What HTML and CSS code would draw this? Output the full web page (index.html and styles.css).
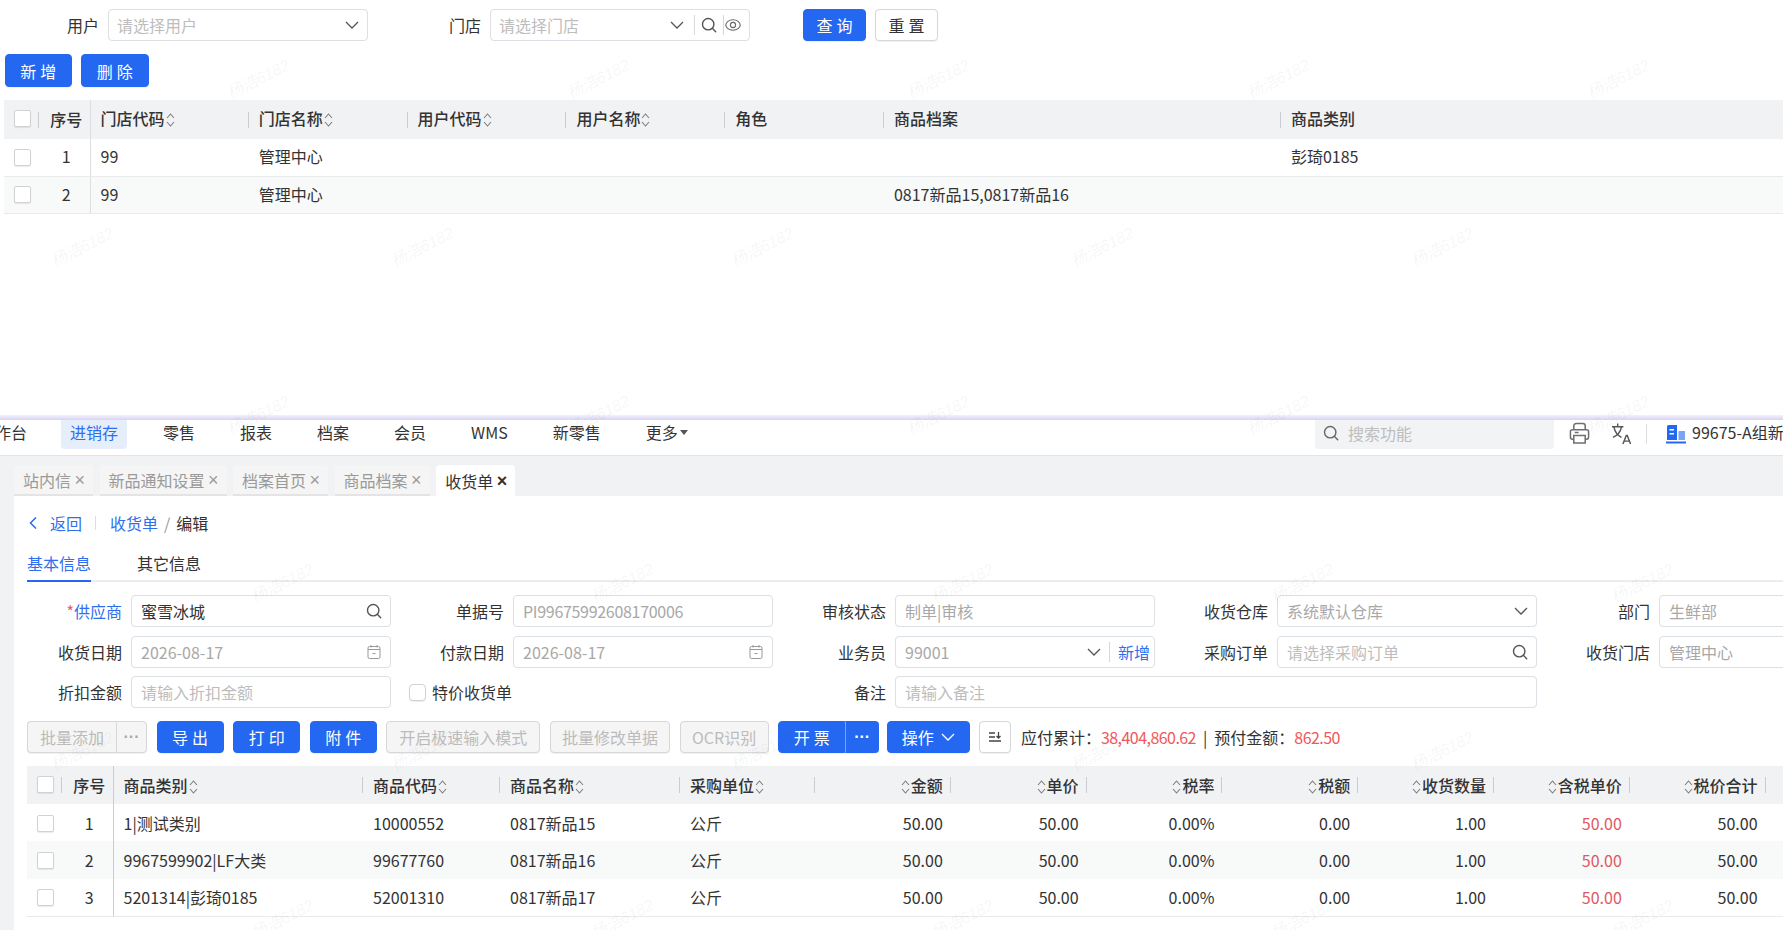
FILE: index.html
```html
<!DOCTYPE html>
<html lang="zh-CN">

<head>
    <meta charset="UTF-8">
    <title>收货单</title>
    <link rel="stylesheet" href="styles.css">
</head>

<body>
    <svg class="defs" aria-hidden="true">
        <symbol id="i-down" viewBox="0 0 14 14"><path d="M1 4l6 6 6-6" fill="none" stroke="currentColor" stroke-width="1.3"/></symbol>
        <symbol id="i-search" viewBox="0 0 16 16"><circle cx="7.2" cy="7.2" r="5.7" fill="none" stroke="currentColor" stroke-width="1.4"/><path d="M11.3 11.3l3.4 3.4" stroke="currentColor" stroke-width="1.4" stroke-linecap="round"/></symbol>
        <symbol id="i-eye" viewBox="0 0 16 16"><ellipse cx="8" cy="8" rx="7.2" ry="5.2" fill="none" stroke="currentColor" stroke-width="1.1"/><circle cx="8" cy="8" r="2.6" fill="none" stroke="currentColor" stroke-width="1.1"/></symbol>
        <symbol id="i-sort" viewBox="0 0 9 16"><path d="M1 6l3.5-4L8 6M1 10l3.5 4L8 10" fill="none" stroke="currentColor" stroke-width="1.1"/></symbol>
        <symbol id="i-date" viewBox="0 0 16 16"><rect x="2" y="2.5" width="12" height="12" rx="1.5" fill="none" stroke="currentColor"/><path d="M2 5.5h12M5 1v2.5M11 1v2.5M6.5 9.5h3" fill="none" stroke="currentColor"/></symbol>
    </svg>

    <div class="top-panel">
        <div class="filter">
            <div class="field">
                <label class="field-label">用户</label>
                <div class="input"><span class="hint">请选择用户</span><svg class="ico"><use href="#i-down"/></svg></div>
            </div>
            <div class="field">
                <label class="field-label">门店</label>
                <div class="input input-store">
                    <span class="hint">请选择门店</span>
                    <svg class="ico"><use href="#i-down"/></svg>
                    <i class="vline"></i>
                    <svg class="ico ico-search"><use href="#i-search"/></svg>
                    <i class="vline"></i>
                    <svg class="ico ico-eye"><use href="#i-eye"/></svg>
                </div>
            </div>
            <div class="filter-actions">
                <button class="btn btn-blue btn-two">查询</button>
                <button class="btn btn-two">重置</button>
            </div>
        </div>
        <div class="top-actions">
            <button class="btn btn-blue btn-two">新增</button>
            <button class="btn btn-blue btn-two">删除</button>
        </div>
        <table class="grid grid-top">
            <colgroup>
                <col class="c-check"><col class="c-seq">
                <col class="c-top"><col class="c-top"><col class="c-top"><col class="c-top"><col class="c-top">
                <col class="c-top-wide"><col>
            </colgroup>
            <thead>
                <tr>
                    <th class="cell-check"><span class="check"></span></th>
                    <th class="cell-seq">序号</th>
                    <th>门店代码<svg class="sort"><use href="#i-sort"/></svg></th>
                    <th>门店名称<svg class="sort"><use href="#i-sort"/></svg></th>
                    <th>用户代码<svg class="sort"><use href="#i-sort"/></svg></th>
                    <th>用户名称<svg class="sort"><use href="#i-sort"/></svg></th>
                    <th>角色</th>
                    <th>商品档案</th>
                    <th>商品类别</th>
                </tr>
            </thead>
            <tbody>
                <tr>
                    <td class="cell-check"><span class="check"></span></td>
                    <td class="cell-seq">1</td>
                    <td>99</td><td>管理中心</td><td></td><td></td><td></td><td></td><td>彭琦0185</td>
                </tr>
                <tr>
                    <td class="cell-check"><span class="check"></span></td>
                    <td class="cell-seq">2</td>
                    <td>99</td><td>管理中心</td><td></td><td></td><td></td><td>0817新品15,0817新品16</td><td></td>
                </tr>
            </tbody>
        </table>
    </div>

    <div class="seam"></div>

    <nav class="nav">
        <a class="nav-item nav-first">工作台</a>
        <a class="nav-item active">进销存</a>
        <a class="nav-item">零售</a>
        <a class="nav-item">报表</a>
        <a class="nav-item">档案</a>
        <a class="nav-item">会员</a>
        <a class="nav-item">WMS</a>
        <a class="nav-item">新零售</a>
        <a class="nav-item">更多<i class="caret"></i></a>
        <div class="nav-right">
            <div class="nav-search"><svg class="ico ico-nav"><use href="#i-search"/></svg><span>搜索功能</span></div>
            <svg class="nav-icon" viewBox="0 0 22 24"><path d="M5 8V4a2.500 2.500 0 0 1 2.500-2.500h7A2.500 2.500 0 0 1 17 4v4M5 18H3.500A2 2 0 0 1 1.500 16v-6a2 2 0 0 1 2-2h15a2 2 0 0 1 2 2v6a2 2 0 0 1-2 2H17M5 14h12v8H5zM6 11h4" fill="none" stroke="#6f6f6f" stroke-width="1.6"/></svg>
            <svg class="nav-icon nav-lang" viewBox="0 0 22 24"><path d="M1 5h12M7 1.500V5M3 5c1 5 4 9 8 11M11 5c-1 5-4 9-9 11" fill="none" stroke="#555" stroke-width="1.500"/><path d="M12.500 23l3.500-9h1l3.500 9M14 20h5.500" fill="none" stroke="#555" stroke-width="1.500"/></svg>
            <i class="nav-sep"></i>
            <svg class="nav-org" viewBox="0 0 20 20"><path d="M1 2.500A1.500 1.500 0 0 1 2.500 1H11v15H1z" fill="#2468f2"/><path d="M12.500 7H19v9h-6.500z" fill="#7aa5f7"/><path d="M0 17.500h20V19.500H0z" fill="#2468f2"/><path d="M3.500 5h4.500v1.500H3.500zM3.500 9h4.500v1.500H3.500z" fill="#fff"/></svg>
            <span class="nav-org-name">99675-A组新零售门店</span>
        </div>
    </nav>

    <div class="work">
        <div class="tabs">
            <a class="tab">站内信<b>×</b></a>
            <a class="tab">新品通知设置<b>×</b></a>
            <a class="tab">档案首页<b>×</b></a>
            <a class="tab">商品档案<b>×</b></a>
            <a class="tab tab-on">收货单<b>×</b></a>
        </div>

        <div class="sheet">
            <div class="crumb">
                <svg class="crumb-back" viewBox="0 0 8 14"><path d="M7 1.500L1.500 7 7 12.500" fill="none" stroke="#2468f2" stroke-width="1.500"/></svg>
                <a class="link">返回</a>
                <i class="crumb-sep"></i>
                <a class="link">收货单</a>
                <span class="crumb-slash">/</span>
                <span>编辑</span>
            </div>

            <div class="subtabs">
                <a class="subtab subtab-on">基本信息</a>
                <a class="subtab">其它信息</a>
            </div>

            <div class="form">
                <div class="field">
                    <label class="field-label req"><em>*</em>供应商</label>
                    <div class="input"><span class="value">蜜雪冰城</span><svg class="ico ico-search"><use href="#i-search"/></svg></div>
                </div>
                <div class="field">
                    <label class="field-label">单据号</label>
                    <div class="input"><span class="muted tight">PI99675992608170006</span></div>
                </div>
                <div class="field">
                    <label class="field-label">审核状态</label>
                    <div class="input"><span class="muted">制单|审核</span></div>
                </div>
                <div class="field">
                    <label class="field-label">收货仓库</label>
                    <div class="input"><span class="muted">系统默认仓库</span><svg class="ico"><use href="#i-down"/></svg></div>
                </div>
                <div class="field">
                    <label class="field-label">部门</label>
                    <div class="input"><span class="muted">生鲜部</span></div>
                </div>

                <div class="field">
                    <label class="field-label">收货日期</label>
                    <div class="input"><span class="muted">2026-08-17</span><svg class="ico ico-light"><use href="#i-date"/></svg></div>
                </div>
                <div class="field">
                    <label class="field-label">付款日期</label>
                    <div class="input"><span class="muted">2026-08-17</span><svg class="ico ico-light"><use href="#i-date"/></svg></div>
                </div>
                <div class="field">
                    <label class="field-label">业务员</label>
                    <div class="input input-staff">
                        <span class="muted">99001</span>
                        <svg class="ico"><use href="#i-down"/></svg>
                        <i class="vline"></i>
                        <a class="link">新增</a>
                    </div>
                </div>
                <div class="field">
                    <label class="field-label">采购订单</label>
                    <div class="input"><span class="hint">请选择采购订单</span><svg class="ico ico-search"><use href="#i-search"/></svg></div>
                </div>
                <div class="field">
                    <label class="field-label">收货门店</label>
                    <div class="input"><span class="muted">管理中心</span></div>
                </div>

                <div class="field">
                    <label class="field-label">折扣金额</label>
                    <div class="input"><span class="hint">请输入折扣金额</span></div>
                </div>
                <div class="field field-check">
                    <span class="check check-round"></span><span>特价收货单</span>
                </div>
                <div class="field field-wide">
                    <label class="field-label">备注</label>
                    <div class="input"><span class="hint">请输入备注</span></div>
                </div>
            </div>

            <div class="toolbar">
                <div class="btn-split btn-off">
                    <button class="btn btn-off btn-main">批量添加</button>
                    <button class="btn btn-off btn-more">···</button>
                </div>
                <button class="btn btn-blue btn-two btn-w67">导出</button>
                <button class="btn btn-blue btn-two btn-w67">打印</button>
                <button class="btn btn-blue btn-two btn-w67">附件</button>
                <button class="btn btn-off btn-w154">开启极速输入模式</button>
                <button class="btn btn-off btn-w120">批量修改单据</button>
                <button class="btn btn-off btn-w89">OCR识别</button>
                <div class="btn-split">
                    <button class="btn btn-blue btn-two btn-w67">开票</button>
                    <button class="btn btn-blue btn-more">···</button>
                </div>
                <button class="btn btn-blue btn-drop">操作<svg class="ico"><use href="#i-down"/></svg></button>
                <button class="btn btn-square">
                    <svg viewBox="0 0 14 14"><path d="M1 3h6M1 7h6M1 11h12M10.500 2v6M8.500 6l2 2 2-2" fill="none" stroke="#444" stroke-width="1.300"/></svg>
                </button>
                <div class="totals">应付累计：<span class="red">38,404,860.62</span><i>|</i>预付金额：<span class="red">862.50</span></div>
            </div>

            <table class="grid grid-main">
                <colgroup>
                    <col class="c-check"><col class="c-seq">
                    <col class="c-cat"><col class="c-code"><col class="c-name"><col class="c-unit">
                    <col class="c-num"><col class="c-num"><col class="c-num"><col class="c-num"><col class="c-num"><col class="c-num"><col class="c-num">
                    <col>
                </colgroup>
                <thead>
                    <tr>
                        <th class="cell-check"><span class="check"></span></th>
                        <th class="cell-seq">序号</th>
                        <th>商品类别<svg class="sort"><use href="#i-sort"/></svg></th>
                        <th>商品代码<svg class="sort"><use href="#i-sort"/></svg></th>
                        <th>商品名称<svg class="sort"><use href="#i-sort"/></svg></th>
                        <th>采购单位<svg class="sort"><use href="#i-sort"/></svg></th>
                        <th class="num"><svg class="sort"><use href="#i-sort"/></svg>金额</th>
                        <th class="num"><svg class="sort"><use href="#i-sort"/></svg>单价</th>
                        <th class="num"><svg class="sort"><use href="#i-sort"/></svg>税率</th>
                        <th class="num"><svg class="sort"><use href="#i-sort"/></svg>税额</th>
                        <th class="num"><svg class="sort"><use href="#i-sort"/></svg>收货数量</th>
                        <th class="num"><svg class="sort"><use href="#i-sort"/></svg>含税单价</th>
                        <th class="num"><svg class="sort"><use href="#i-sort"/></svg>税价合计</th>
                        <th></th>
                    </tr>
                </thead>
                <tbody>
                    <tr>
                        <td class="cell-check"><span class="check"></span></td>
                        <td class="cell-seq">1</td>
                        <td>1|测试类别</td><td>10000552</td><td>0817新品15</td><td>公斤</td>
                        <td class="num">50.00</td><td class="num">50.00</td><td class="num">0.00%</td><td class="num">0.00</td><td class="num">1.00</td><td class="num red-soft">50.00</td><td class="num">50.00</td><td></td>
                    </tr>
                    <tr>
                        <td class="cell-check"><span class="check"></span></td>
                        <td class="cell-seq">2</td>
                        <td>9967599902|LF大类</td><td>99677760</td><td>0817新品16</td><td>公斤</td>
                        <td class="num">50.00</td><td class="num">50.00</td><td class="num">0.00%</td><td class="num">0.00</td><td class="num">1.00</td><td class="num red-soft">50.00</td><td class="num">50.00</td><td></td>
                    </tr>
                    <tr>
                        <td class="cell-check"><span class="check"></span></td>
                        <td class="cell-seq">3</td>
                        <td>5201314|彭琦0185</td><td>52001310</td><td>0817新品17</td><td>公斤</td>
                        <td class="num">50.00</td><td class="num">50.00</td><td class="num">0.00%</td><td class="num">0.00</td><td class="num">1.00</td><td class="num red-soft">50.00</td><td class="num">50.00</td><td></td>
                    </tr>
                </tbody>
            </table>
        </div>
    </div>

    <!-- watermark -->
    <div class="wm">
        <div class="wm-row wm-a"><span>杨浩6182</span><span>杨浩6182</span><span>杨浩6182</span><span>杨浩6182</span><span>杨浩6182</span></div>
        <div class="wm-row wm-b"><span>杨浩6182</span><span>杨浩6182</span><span>杨浩6182</span><span>杨浩6182</span><span>杨浩6182</span></div>
        <div class="wm-row wm-a"><span>杨浩6182</span><span>杨浩6182</span><span>杨浩6182</span><span>杨浩6182</span><span>杨浩6182</span></div>
        <div class="wm-row wm-c"><span>杨浩6182</span><span>杨浩6182</span><span>杨浩6182</span><span>杨浩6182</span><span>杨浩6182</span></div>
        <div class="wm-row wm-b"><span>杨浩6182</span><span>杨浩6182</span><span>杨浩6182</span><span>杨浩6182</span><span>杨浩6182</span></div>
        <div class="wm-row wm-c"><span>杨浩6182</span><span>杨浩6182</span><span>杨浩6182</span><span>杨浩6182</span><span>杨浩6182</span></div>
    </div>
</body>

</html>
```

FILE: styles.css
```css
* {
    box-sizing: border-box;
}

body {
    margin: 0;
    width: 1783px;
    height: 930px;
    overflow: hidden;
    position: relative;
    background: #fff;
    color: #333;
    font-family: "Noto Sans CJK SC", "Noto Sans", sans-serif;
    font-size: 16px;
    line-height: 22px;
}

.defs {
    display: none;
}

/* shared controls */
.ico {
    width: 14px;
    height: 14px;
    flex: none;
    color: #555;
}

.ico-search {
    width: 16px;
    height: 16px;
}

.ico-light {
    width: 16px;
    height: 16px;
    color: #999;
}

.vline {
    width: 1px;
    height: 20px;
    background: #d8d8d8;
    flex: none;
}

.field {
    display: flex;
    align-items: center;
    gap: 9px;
}

.field-label {
    width: 108px;
    flex: none;
    text-align: right;
    white-space: nowrap;
}

.req {
    color: #2f6fed;
}

.req em {
    font-style: normal;
    color: #f0585c;
}

.input {
    width: 260px;
    height: 32px;
    flex: none;
    display: flex;
    align-items: center;
    justify-content: space-between;
    padding: 0 8px 0 9px;
    border: 1px solid #dcdfe3;
    border-radius: 4px;
    background: #fff;
    white-space: nowrap;
}

.hint {
    color: #bdbdbd;
}

.muted {
    color: #a8a8a8;
}

.tight {
    letter-spacing: -0.3px;
}

.value {
    color: #333;
}

.link {
    color: #2f6fed;
}

.btn {
    height: 32px;
    padding: 0 13px;
    border: 1px solid #d5d7da;
    border-radius: 4px;
    background: #fff;
    color: #333;
    font: inherit;
    white-space: nowrap;
    box-shadow: 0 1px 1px rgba(0, 0, 0, 0.06);
}

.btn-blue {
    background: #2468f2;
    border-color: #2468f2;
    color: #fff;
}

.btn-off {
    background: #f5f5f5;
    color: #bcbcbc;
}

.btn-two {
    letter-spacing: 4px;
    text-indent: 4px;
}

.btn-w67 {
    width: 67px;
    padding: 0;
}

.btn-w154 {
    width: 154px;
    padding: 0;
}

.btn-w120 {
    width: 120px;
    padding: 0;
}

.btn-w89 {
    width: 89px;
    padding: 0;
}

.check {
    display: block;
    width: 17px;
    height: 17px;
    flex: none;
    background: #fff;
    border: 1px solid #d2d2d2;
    border-radius: 2px;
    box-shadow: 0 1px 1px rgba(0, 0, 0, 0.08);
}

.check-round {
    border-radius: 4px;
}

/* top screen */
.top-panel {
    height: 415px;
    padding: 9px 0 0 4px;
}

.filter {
    display: flex;
    align-items: center;
    margin-left: 4px;
}

.filter .field {
    margin-right: 22px;
}

.filter .field-label {
    width: 91px;
}

.filter .input {
    padding-left: 8px;
}

.input-store {
    justify-content: flex-start;
}

.input-store .hint {
    flex: 1;
}

.input-store .ico {
    margin-right: 10px;
}

.input-store .ico-search {
    margin: 0 6px;
}

.input-store .ico-eye {
    width: 16px;
    height: 16px;
    margin: 0 0 0 1px;
    color: #666;
}

.filter-actions {
    display: flex;
    gap: 9px;
    margin-left: 31px;
}

.filter-actions .btn {
    width: 63px;
    padding: 0;
}

.top-actions {
    display: flex;
    gap: 9px;
    margin: 13px 0 0 0.5px;
}

.top-actions .btn {
    width: 67.5px;
    height: 33px;
    padding: 0;
}

/* tables */
.grid {
    table-layout: fixed;
    border-collapse: collapse;
    width: 100%;
}

.grid th {
    height: 39px;
    padding: 0 10px;
    text-align: left;
    font-weight: 500;
    background-color: #f1f2f4;
    background-image: linear-gradient(#c9ccd0, #c9ccd0);
    background-position: right center;
    background-size: 1px 16px;
    background-repeat: no-repeat;
    white-space: nowrap;
}

.grid th:last-child {
    background-image: none;
}

.grid td {
    height: 37px;
    padding: 0 10px 2px;
    white-space: nowrap;
}

.grid tbody tr:nth-child(even) {
    background: #f8f9f9;
}

.grid tbody tr:last-child td {
    border-bottom: 1px solid #e8eaec;
}

.grid-top {
    width: 1779px;
    margin-top: 13px;
}

.grid-top th {
    padding-bottom: 3px;
}

.grid-top tbody td {
    border-bottom: 1px solid #e8eaec;
}

.grid .cell-check {
    padding: 0 0 0 10px;
}

.grid th.cell-check {
    padding-bottom: 2px;
}

.grid .cell-seq {
    padding: 0 0 2px 4px;
    text-align: center;
    border-right: 1px solid #dcdee1;
    background-image: none;
}

.c-check {
    width: 35px;
}

.c-seq {
    width: 51px;
}

.c-top {
    width: 158.8px;
}

.c-top-wide {
    width: 397px;
}

.c-cat {
    width: 250px;
}

.c-code {
    width: 137px;
}

.c-name {
    width: 180px;
}

.c-unit {
    width: 135px;
}

.c-num {
    width: 135.8px;
}

.sort {
    width: 9px;
    height: 16px;
    margin: 0 1px;
    vertical-align: -3px;
    color: #7d7d7d;
}

.grid .num {
    text-align: right;
    padding-right: 8px;
}

.red-soft {
    color: #e0595f;
}

/* nav */
.seam {
    height: 5px;
    background: linear-gradient(#f4f2fc, #d6d4f2);
}

.nav {
    height: 36px;
    display: flex;
    border-bottom: 1px solid #e3e4e6;
    overflow: hidden;
    background: #fff;
}

.nav-item {
    height: 29px;
    padding-bottom: 5px;
    margin-right: 45px;
    flex: none;
    display: flex;
    align-items: center;
    color: #333;
    white-space: nowrap;
}

.nav-first {
    margin-left: -21px;
    margin-right: 34px;
}

.nav-item.active {
    background: #e6eefc;
    color: #2f6fed;
    margin-right: 36px;
    padding: 0 9px 5px;
    border-radius: 0 0 4px 4px;
}

.caret {
    width: 0;
    height: 0;
    margin-left: 2px;
    border: 4px solid transparent;
    border-top: 5px solid #555;
    border-bottom: 0;
}

.nav-right {
    position: absolute;
    left: 1315px;
    display: flex;
    align-items: flex-start;
    height: 29px;
    white-space: nowrap;
}

.nav-search {
    width: 239px;
    height: 29px;
    flex: none;
    display: flex;
    align-items: center;
    gap: 9px;
    padding: 0 0 4px 8px;
    background: #f2f3f5;
    border-radius: 0 0 4px 4px;
    color: #bdbdbd;
}

.ico-nav {
    width: 16px;
    height: 16px;
    color: #666;
}

.nav-icon {
    width: 21px;
    height: 23px;
    flex: none;
    margin: 2px 0 0 15px;
}

.nav-lang {
    margin-left: 21px;
}

.nav-sep {
    width: 1px;
    height: 20px;
    flex: none;
    margin: 4px 19px 0 14px;
    background: #ddd;
}

.nav-org {
    width: 20px;
    height: 20px;
    flex: none;
    margin-top: 4px;
}

.nav-org-name {
    margin: 1px 0 0 6px;
    flex: none;
}

/* work area */
.work {
    height: 474px;
    padding-left: 14px;
    background: #f1f2f4;
}

.tabs {
    height: 40px;
    padding-top: 9px;
    display: flex;
    gap: 6.5px;
}

.tab {
    height: 31px;
    padding: 0 8px 0 9px;
    display: flex;
    align-items: center;
    gap: 3.5px;
    background: #f5f5f5;
    border-bottom: 2px solid #e4e4e4;
    border-radius: 4px 4px 0 0;
    color: #9a9a9a;
    white-space: nowrap;
}

.tab b {
    font-family: "Liberation Sans", sans-serif;
    font-weight: 400;
    font-size: 18px;
    line-height: 1;
}

.tab-on {
    background: #fff;
    border-bottom: 0;
    color: #333;
}

.tab-on b {
    font-weight: 700;
}

.sheet {
    height: 434px;
    background: #fff;
}

.crumb {
    height: 56px;
    padding: 16px 0 0 15px;
    display: flex;
    align-items: flex-start;
    white-space: nowrap;
}

.crumb-back {
    width: 8px;
    height: 14px;
    margin: 4px 13px 0 0;
}

.crumb-sep {
    width: 1px;
    height: 14px;
    margin: 4px 14px 0 13px;
    background: #ddd;
}

.crumb-slash {
    margin: 0 6px;
    color: #999;
}

.subtabs {
    height: 30px;
    margin-left: 13px;
    display: flex;
    gap: 46px;
    border-bottom: 2px solid #ededed;
}

.subtab {
    height: 30px;
}

.subtab-on {
    color: #2f6fed;
    border-bottom: 2px solid #2468f2;
}

.form {
    margin-top: 13px;
    display: grid;
    grid-template-columns: repeat(5, 376px);
    grid-auto-rows: 32px;
    gap: 8.5px 6px;
}

.field-check {
    padding-left: 13px;
    gap: 6px;
}

.field-wide {
    grid-column: 3 / span 2;
}

.field-wide .input {
    width: 642px;
}

.input-staff {
    justify-content: flex-start;
    gap: 8px;
    padding-right: 4px;
}

.input-staff .muted {
    flex: 1;
}

.toolbar {
    margin: 13px 0 0 13px;
    display: flex;
    align-items: center;
    gap: 9.6px;
    white-space: nowrap;
}

.btn-split {
    display: flex;
    border-radius: 4px;
    background: none;
}

.btn-main {
    width: 89px;
    padding: 0;
    border-radius: 4px 0 0 4px;
    border-right: 0;
}

.btn-split .btn-w67 {
    border-radius: 4px 0 0 4px;
}

.btn-more {
    width: 31px;
    padding: 0;
    border-radius: 0 4px 4px 0;
    font-family: "Liberation Sans", sans-serif;
    font-weight: 700;
}

.btn-off.btn-more {
    color: #aaa;
}

.btn-blue.btn-more {
    width: 34px;
    border-left-color: rgba(255, 255, 255, 0.4);
}

.btn-drop {
    width: 83px;
    padding: 0;
    display: flex;
    align-items: center;
    justify-content: center;
    gap: 7px;
    margin-left: -2px;
}

.btn-drop .ico {
    color: #fff;
}

.btn-square {
    width: 32px;
    padding: 0;
    display: flex;
    align-items: center;
    justify-content: center;
}

.btn-square svg {
    width: 14px;
    height: 14px;
}

.totals i {
    font-style: normal;
    margin: 0 7px;
}

.red {
    color: #f0585c;
    letter-spacing: -0.55px;
}

.grid-main {
    width: 1756px;
    margin: 13px 0 0 13px;
}

.grid-main th {
    height: 38px;
}

.grid-main td {
    padding-bottom: 0;
}

.grid-main .cell-seq {
    padding-bottom: 0;
    border-right-color: #c9ccd0;
}

.grid-main .cell-check {
    padding: 1px 0 0 10px;
}

.grid-main th.cell-check {
    padding: 0 0 2px 10px;
}

.grid-main tbody tr:nth-child(2) td {
    height: 38px;
}

/* watermark */
.wm {
    position: absolute;
    top: 84px;
    left: 0;
    right: 0;
    display: flex;
    flex-direction: column;
    gap: 148px;
    pointer-events: none;
}

.wm-row {
    height: 20px;
    display: flex;
    white-space: nowrap;
}

.wm-row span {
    flex: 0 0 340px;
    transform: rotate(-27deg);
    transform-origin: left center;
    font-size: 16px;
    font-family: "Liberation Sans", "Noto Sans CJK SC", sans-serif;
    font-style: italic;
    color: rgba(0, 0, 0, 0.055);
}

.wm-a {
    padding-left: 228px;
}

.wm-b {
    padding-left: 52px;
}

.wm-c {
    padding-left: 252px;
}
```
